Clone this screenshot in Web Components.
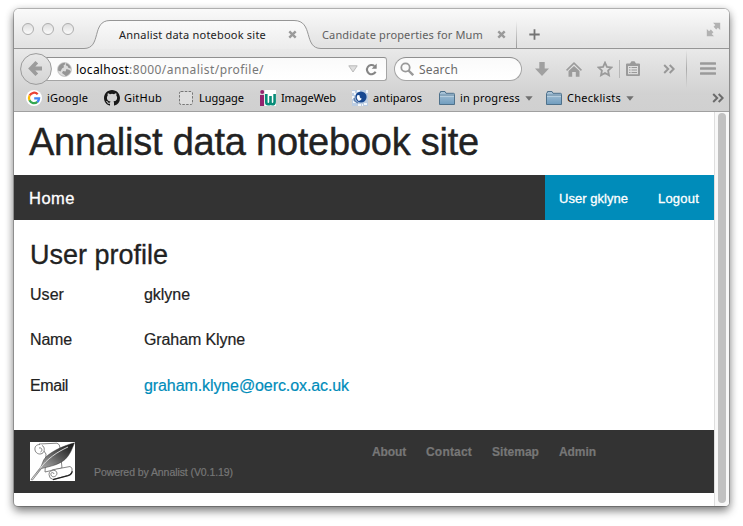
<!DOCTYPE html>
<html lang="en">
<head>
<meta charset="utf-8">
<title>Annalist data notebook site</title>
<style>
html,body{margin:0;height:526px;overflow:hidden;background:#fff}
body{font-family:"Liberation Sans",Arial,sans-serif;color:#222}
</style>
</head>
<body>
<browser-window>
  <tab-strip slot="chrome"></tab-strip>
  <tool-bar slot="chrome"></tool-bar>
  <bookmarks-bar slot="chrome"></bookmarks-bar>
  <site-page></site-page>
</browser-window>
<script>
function define(name, html, after) {
  const t = document.createElement('template');
  t.innerHTML = html;
  customElements.define(name, class extends HTMLElement {
    connectedCallback() {
      if (this.shadowRoot) return;
      this.attachShadow({mode: 'open'}).append(t.content.cloneNode(true));
      if (after) after.call(this, this.shadowRoot);
    }
  });
}

// Text label whose tracking is adjusted so it spans the width in its "w" attribute.
define('fit-text', `<style>:host{display:inline-block;white-space:nowrap;flex:none}span{display:inline-block}</style><span><slot></slot></span>`, function (r) {
  const w = +this.getAttribute('w');
  const n = this.textContent.length;
  const nat = r.querySelector('span').getBoundingClientRect().width;
  this.style.width = w + 'px';
  this.style.letterSpacing = ((w - nat) / n).toFixed(3) + 'px';
});

const ICONS = {
  close: [9, 9, '<path d="M1.3 1.3l6.4 6.4M7.7 1.3L1.3 7.7" stroke="#9a9a9a" stroke-width="2.4"/>'],
  plus: [11, 11, '<path d="M5.5 .3v10.4M.3 5.5h10.4" stroke="#747474" stroke-width="1.800"/>'],
  expand: [15, 15, '<path d="M7 .8h7.200V8l-2.300-2.300L10.200 7.400 7.600 4.800l1.700-1.700zM.8 7l2.300 2.300 1.700-1.700 2.600 2.600-1.700 1.700L8 14.200H.8z" fill="#b2b2b2"/>'],
  back: [32, 32, '<circle cx="16" cy="16" r="15.4" fill="url(#bk)" stroke="#9b9b9b"/><defs><linearGradient id="bk" x2="0" y2="1"><stop stop-color="#e8e8e8"/><stop offset="1" stop-color="#d4d4d4"/></linearGradient></defs><path d="M16.800 9.200l-6 6.300 6 6.300M11 15.500H22" fill="none" stroke="#9c9c9c" stroke-width="3.800"/>'],
  globe: [15, 15, '<circle cx="7.500" cy="7.500" r="6.900" fill="#dcdcdc" stroke="#a6a6a6" stroke-width=".6"/><path d="M1.200 5.500Q3 1.200 7.500.8L8.500 2 6.500 3.500 7 5.200 5 6.500 3.500 9.500 1 8.500zM9 1.200Q13 2.300 14 6.500L11.500 6 10.500 4 9 3.500zM9.500 7l3 1 1.300 1.500Q12.500 13 9 14.200L7 12.500 5 11l1-2 2.500.5z" fill="#959595"/>'],
  drop: [10, 8, '<path d="M.8.800h8.400L5 7z" fill="#dedede" stroke="#bababa"/>'],
  reload: [13, 13, '<path d="M10.600 8.800A4.600 4.600 0 1 1 9.400 3" fill="none" stroke="#858585" stroke-width="2.100"/><path d="M6.700 5.800h5V.600z" fill="#858585"/>'],
  search: [14, 14, '<circle cx="5.500" cy="5.500" r="4.200" fill="none" stroke="#999" stroke-width="1.800"/><path d="M8.500 8.500l4.700 4.700" stroke="#999" stroke-width="2.400"/>'],
  down: [14, 14, '<path d="M4.300 0h5.400v6.500H14L7 14 0 6.500h4.300z" fill="#a0a0a0"/>'],
  home: [16, 15, '<path d="M0 7.800L8 0l8 7.800-1.100 1.100L8 2.300 1.100 8.900z" fill="#9c9c9c"/><path d="M2.500 9L8 3.900 13.500 9v5.800H9.800V10H6.200v4.800H2.500z" fill="#9c9c9c"/>'],
  star: [16, 16, '<path d="M8 1.700l1.900 4.200 4.600.5-3.400 3.200.9 4.700-4-2.300-4 2.300.9-4.700-3.400-3.200 4.600-.5z" fill="none" stroke="#9a9a9a" stroke-width="1.800"/>'],
  clip: [14, 15, '<path fill-rule="evenodd" d="M1 2.500h3L5.500.3h3L10 2.500h3a1 1 0 0 1 1 1V14a1 1 0 0 1-1 1H1a1 1 0 0 1-1-1V3.500a1 1 0 0 1 1-1zM2 5V13.200h10V5z" fill="#9a9a9a"/><path d="M3 6.500h1.500M5.500 6.500H11M3 9h1.500M5.500 9H11M3 11.500h1.500M5.500 11.500H11" stroke="#9a9a9a" stroke-width="1.200"/>'],
  more: [12, 10, '<path d="M1.200 1l4 4-4 4M6.700 1l4 4-4 4" fill="none" stroke="#989898" stroke-width="2"/>'],
  more2: [12, 10, '<path d="M1.200 1l4 4-4 4M6.700 1l4 4-4 4" fill="none" stroke="#6c6c6c" stroke-width="2"/>'],
  menu: [16, 13, '<path d="M1 1.500h14M1 6.500h14M1 11.500h14" stroke="#9a9a9a" stroke-width="2.600" stroke-linecap="round"/>'],
  google: [16, 16, '<circle cx="8" cy="8" r="8" fill="#fff"/><g fill="none" stroke-width="2.300"><path d="M11.700 4.200A5 5 0 0 0 3.600 5.600" stroke="#ea4335"/><path d="M3.600 5.500a5.200 5.200 0 0 0 0 5" stroke="#fbbc05"/><path d="M3.500 10.300a5.100 5.100 0 0 0 7.900 1.600" stroke="#34a853"/><path d="M11.300 12a5 5 0 0 0 1.800-3.700H8.200" stroke="#4285f4"/></g>'],
  github: [16, 16, '<path fill="#181818" d="M8 0C3.580 0 0 3.580 0 8c0 3.540 2.290 6.530 5.470 7.590.4.070.55-.17.55-.38 0-.19-.01-.82-.01-1.490-2.010.37-2.530-.49-2.690-.94-.09-.23-.48-.94-.82-1.130-.28-.15-.68-.52-.01-.53.63-.01 1.080.58 1.230.82.72 1.210 1.870.87 2.330.66.07-.52.28-.87.51-1.070-1.780-.2-3.640-.89-3.640-3.950 0-.87.31-1.590.82-2.150-.08-.2-.36-1.020.08-2.120 0 0 .67-.21 2.200.82a7.600 7.600 0 0 1 4 0c1.530-1.040 2.200-.82 2.200-.82.44 1.100.16 1.920.08 2.120.51.56.82 1.270.82 2.150 0 3.070-1.870 3.750-3.650 3.950.29.25.54.73.54 1.480 0 1.070-.01 1.930-.01 2.200 0 .21.15.46.55.38A8 8 0 0 0 16 8c0-4.420-3.580-8-8-8z"/>'],
  dashed: [16, 16, '<rect x="1.500" y="1.500" width="13" height="13" rx="1.500" fill="#dedede" stroke="#777" stroke-dasharray="2.500 1.300"/>'],
  iw: [16, 16, '<path fill="#fff" d="M4.500 0H16v16H4.500z"/><rect y="5" width="4" height="11" fill="#93246f"/><circle cx="2.200" cy="2" r="2" fill="#93246f"/><path d="M6.300 4v8.300q0 2 1.800 2 2.400 0 2.400-2.400V6v6.300q0 2 1.700 2 2.400 0 2.400-2.400V4" fill="none" stroke="#078c78" stroke-width="2.600"/>'],
  anti: [16, 16, '<rect width="16" height="16" fill="#bccde2"/><path d="M0 1h3v2H0zM5 0h3v2H5zM0 6h2v3H0zM1 11h3v2H1zM12 13h3v2h-3zM14 0h2v3h-2zM6 14h3v2H6zM10 14h1v2h-1zM2 3h2v2H2z" fill="#f2f6fa"/><circle cx="9" cy="7" r="5.600" fill="#174891"/><path d="M5 5.500Q8 4 10 8q-1 3.500-4 2.500-2-2-1-5z" fill="#f8fbff"/><circle cx="10.500" cy="6" r="2.800" fill="#174891"/><path d="M2 8l1 3 3 2" fill="none" stroke="#5c7eae" stroke-width="1.500"/>'],
  folder: [16, 14, '<defs><linearGradient id="fg" x2="0" y2="1"><stop stop-color="#adc6d9"/><stop offset="1" stop-color="#6f9cbe"/></linearGradient></defs><path d="M.5 13.500V2.500q0-1 1-1V.500H6l1 1.800h7.500q1 0 1 1V13.500z" fill="url(#fg)" stroke="#4e718b"/><path d="M1 4.200h14" stroke="#587c97"/><path d="M1 5.200h14" stroke="#c4d8e5"/>'],
  caret: [8, 5, '<path d="M.3.300h7.400L4 4.700z" fill="#707070"/>'],
  scroll: [45, 39, '<defs><linearGradient id="fe" x1="1" x2="0" y2="1"><stop stop-color="#111"/><stop offset=".35" stop-color="#555"/><stop offset=".8" stop-color="#bbb"/><stop offset="1" stop-color="#eee"/></linearGradient></defs><rect width="45" height="39" fill="#fff"/><g fill="#fff" stroke="#666" stroke-width=".8"><path d="M9 2L27 1.200Q30 2 30 6L32 26 15 30 16 12z"/><path d="M10 2.500C6 2.500 4.500 5 5 8s4 5 7 3.500 3-7 0-8M9 6c3-1 4 3 1.500 4"/><path d="M24 27.500L40 24.500q3 1 2 5-1 3-4 4L23 37.500q-4-1-4-5t5-5z"/><path d="M21 29q5-2 6 2c0 4-5 5-6 2s3-3 3-1" /></g><path d="M23 37.600L38 33.700q4-1.500 4.200-4.500" fill="none" stroke="#222" stroke-width="1.400"/><path d="M44.500 .8C33 4 22 9 16 15c-4 4-3 7-6 11L1 37.500 2.500 38l9-11.500C22 24 29 22.500 35 17.500 40 13 42 7 44.500.8z" fill="url(#fe)" stroke="#333" stroke-width=".5"/><path d="M38 5C27 10 17 17 10 26.500" fill="none" stroke="#e6e6e6" stroke-width=".9"/>']
};
define('ui-icon', `<style>:host{display:block;flex:none}svg{display:block}</style>`, function (r) {
  const [w, h, body] = ICONS[this.getAttribute('name')];
  r.innerHTML += `<svg width="${w}" height="${h}" viewBox="0 0 ${w} ${h}">${body}</svg>`;
});

define('browser-window', `<style>
:host{display:flex;flex-direction:column;box-sizing:border-box;width:715px;height:497px;margin:9px 0 0 14px;border-radius:5px 5px 4px 4px;overflow:visible;background:#fff;
box-shadow:0 0 0 1px rgba(0,0,0,.22),0 5px 10px rgba(0,0,0,.45),0 1px 8px rgba(0,0,0,.2)}
.chrome{display:flex;flex-direction:column;height:103px;box-sizing:border-box;border-bottom:1px solid #a0a0a0;border-radius:5px 5px 0 0;overflow:hidden;background:linear-gradient(#fafafa 0,#e2e2e2 38px,#e9e9e9 40px,#d2d2d2 84px,#d0d0d0 102px);font:11px "Noto Sans","Open Sans",sans-serif;color:#000}
.body{flex:1;display:flex;min-height:0}
.view{width:700px}
.bar{flex:1;box-sizing:border-box;border-left:1px solid #dedede;background:#f8f8f8;padding:1px 3px 3px 3px;border-radius:0 0 4px 0}
.thumb{height:100%;width:8px;border-radius:4px;background:#c1c1c1}
</style><div class="chrome"><slot name="chrome"></slot></div><div class="body"><div class="view"><slot></slot></div><div class="bar"><div class="thumb"></div></div></div>`);

define('tab-strip', `<style>
:host{display:flex;position:relative;height:40px;flex:none;box-sizing:border-box;padding-top:12px;align-items:center}
.shape{position:absolute;left:0;top:0}
.lights{display:flex;gap:8px;margin:-13px 0 0 8px;position:relative}
.lights i{width:10px;height:10px;border:1px solid #adadad;border-radius:50%;background:linear-gradient(#dedede,#fbfbfb)}
.row{display:flex;align-items:center;position:relative;margin-top:-1px}
.a{margin-left:45px;color:#222}.b{margin-left:25px;color:#606060}
.sep{width:1px;height:28px;margin:0 12px 0 10px;background:linear-gradient(transparent,#999)}
.exp{margin:-12px 8px 0 auto;position:relative}
</style>
<svg class="shape" width="715" height="40"><defs><linearGradient id="g" x2="0" y2="1"><stop stop-color="#fafafa"/><stop offset="1" stop-color="#ebebeb"/></linearGradient></defs>
<path d="M0 39.500H70C88 39.500 77 11.500 96 11.500H280C300 11.500 289 39.500 307 39.500H715V42H0z" fill="url(#g)" stroke="#969696"/></svg>
<div class="lights"><i></i><i></i><i></i></div>
<div class="row a"><fit-text w="147">Annalist data notebook site</fit-text><ui-icon name="close" style="margin-left:22px"></ui-icon></div>
<div class="row b"><fit-text w="161">Candidate properties for Mum</fit-text><ui-icon name="close" style="margin-left:14px"></ui-icon></div>
<div class="row"><div class="sep"></div><ui-icon name="plus"></ui-icon></div>
<ui-icon class="exp" name="expand"></ui-icon>`);

define('tool-bar', `<style>
:host{display:flex;height:40px;flex:none;align-items:center;padding-left:6px;font-size:12px}
.back{position:relative;z-index:1}
.url{display:flex;align-items:center;box-sizing:border-box;width:342px;height:24px;margin-left:-7px;margin-right:7px;padding-left:11px;background:linear-gradient(#fafafa,#fff);border:1px solid #a5a5a5;border-top-color:#8f8f8f;border-radius:0 3px 3px 0;color:#777}
.url b{font-weight:400;color:#000}
.find{display:flex;align-items:center;box-sizing:border-box;width:128px;height:24px;padding-left:5px;gap:5px;background:linear-gradient(#fafafa,#fff);border:1px solid #a5a5a5;border-top-color:#8f8f8f;border-radius:12px;color:#6a6a6a}
.sep{width:1px;height:18px;background:#b7b7b7}
</style>
<ui-icon class="back" name="back"></ui-icon>
<div class="url"><ui-icon name="globe" style="margin-right:4px"></ui-icon><fit-text w="53"><b>localhost</b></fit-text><fit-text w="135">:8000/annalist/profile/</fit-text><ui-icon name="drop" style="margin-left:84px"></ui-icon><ui-icon name="reload" style="margin-left:7px"></ui-icon></div>
<div class="find"><ui-icon name="search"></ui-icon><fit-text w="39">Search</fit-text></div>
<ui-icon name="down" style="margin-left:13px"></ui-icon>
<ui-icon name="home" style="margin-left:17px"></ui-icon>
<ui-icon name="star" style="margin-left:15px"></ui-icon>
<div class="sep" style="margin-left:6px"></div>
<ui-icon name="clip" style="margin-left:6px;margin-top:-2px"></ui-icon>
<ui-icon name="more" style="margin-left:23px"></ui-icon>
<div class="sep" style="margin-left:11px;height:38px;background:linear-gradient(transparent,#aaa,transparent)"></div>
<ui-icon name="menu" style="margin-left:13px;margin-top:-2px"></ui-icon>`);

define('book-mark', `<style>:host{display:flex;align-items:center;gap:5px;flex:none}</style><span id="i"></span><slot></slot>`, function (r) {
  const i = document.createElement('ui-icon');
  i.setAttribute('name', this.getAttribute('icon'));
  r.getElementById('i').replaceWith(i);
  if (this.hasAttribute('menu')) {
    const c = document.createElement('ui-icon');
    c.setAttribute('name', 'caret');
    r.append(c);
  }
});
define('bookmarks-bar', `<style>:host{display:flex;height:18px;margin-bottom:1px;flex:none;align-items:center;gap:16px;padding:0 5px 0 12px}fit-text{margin-top:-1px}</style>
<book-mark icon="google"><fit-text w="41">iGoogle</fit-text></book-mark>
<book-mark icon="github" style="gap:4px"><fit-text w="38">GitHub</fit-text></book-mark>
<book-mark icon="dashed"><fit-text w="45">Luggage</fit-text></book-mark>
<book-mark icon="iw"><fit-text w="55">ImageWeb</fit-text></book-mark>
<book-mark icon="anti"><fit-text w="49">antiparos</fit-text></book-mark>
<book-mark icon="folder" menu style="margin-left:1px"><fit-text w="60">in progress</fit-text></book-mark>
<book-mark icon="folder" menu style="margin-left:-3px"><fit-text w="54">Checklists</fit-text></book-mark>
<ui-icon name="more2" style="margin-left:auto"></ui-icon>`);

define('profile-row', `<style>:host{display:grid;grid-template-columns:114px 1fr;line-height:20px;font-size:16px}</style><slot name="key"></slot><slot></slot>`);

define('site-page', `<style>
:host{display:flex;flex-direction:column;height:100%;-webkit-text-stroke:.2px currentColor}
header{height:63px;box-sizing:border-box;padding:8px 0 0 15px;font-size:38px;line-height:44px;-webkit-text-stroke:.4px currentColor}
nav{display:flex;height:45px;background:#333;color:#fff;align-items:center;justify-content:space-between;padding-left:15px;font-size:16.500px;-webkit-text-stroke:.3px #fff}
nav fit-text{margin-top:2px}
.user{display:flex;align-items:center;box-sizing:border-box;height:45px;width:169px;padding-left:14px;gap:30px;background:#008cba;font-size:13px}
main{height:210px;box-sizing:border-box;padding:19px 0 0 16px}
h2{margin:0 0 14px;font-weight:400;font-size:27px;line-height:32px;-webkit-text-stroke:.3px currentColor}
.rows{display:grid;grid-template-rows:45px 46px 20px}
a{color:#008cba}
footer{display:flex;height:63px;box-sizing:border-box;padding:12px 0 0 16px;background:#333;color:#777}
.pow{font-size:10.500px;margin:23px 0 0 19px;line-height:14px}
.links{display:flex;gap:20px;margin:3px 0 0 139px;font-size:12px;font-weight:700;line-height:14px}
</style>
<header><fit-text w="450">Annalist data notebook site</fit-text></header>
<nav><fit-text w="46">Home</fit-text><div class="user"><fit-text w="69">User gklyne</fit-text><fit-text w="41">Logout</fit-text></div></nav>
<main><h2><fit-text w="138">User profile</fit-text></h2><div class="rows">
<profile-row><fit-text slot="key" w="34">User</fit-text><fit-text w="46">gklyne</fit-text></profile-row>
<profile-row><fit-text slot="key" w="42">Name</fit-text><fit-text w="101">Graham Klyne</fit-text></profile-row>
<profile-row><fit-text slot="key" w="38">Email</fit-text><fit-text w="205"><a>graham.klyne@oerc.ox.ac.uk</a></fit-text></profile-row></div></main>
<footer><ui-icon name="scroll"></ui-icon><div class="pow"><fit-text w="139">Powered by Annalist (V0.1.19)</fit-text></div>
<div class="links"><fit-text w="34">About</fit-text><fit-text w="46">Contact</fit-text><fit-text w="47">Sitemap</fit-text><fit-text w="37">Admin</fit-text></div></footer>`);
</script>
</body>
</html>
